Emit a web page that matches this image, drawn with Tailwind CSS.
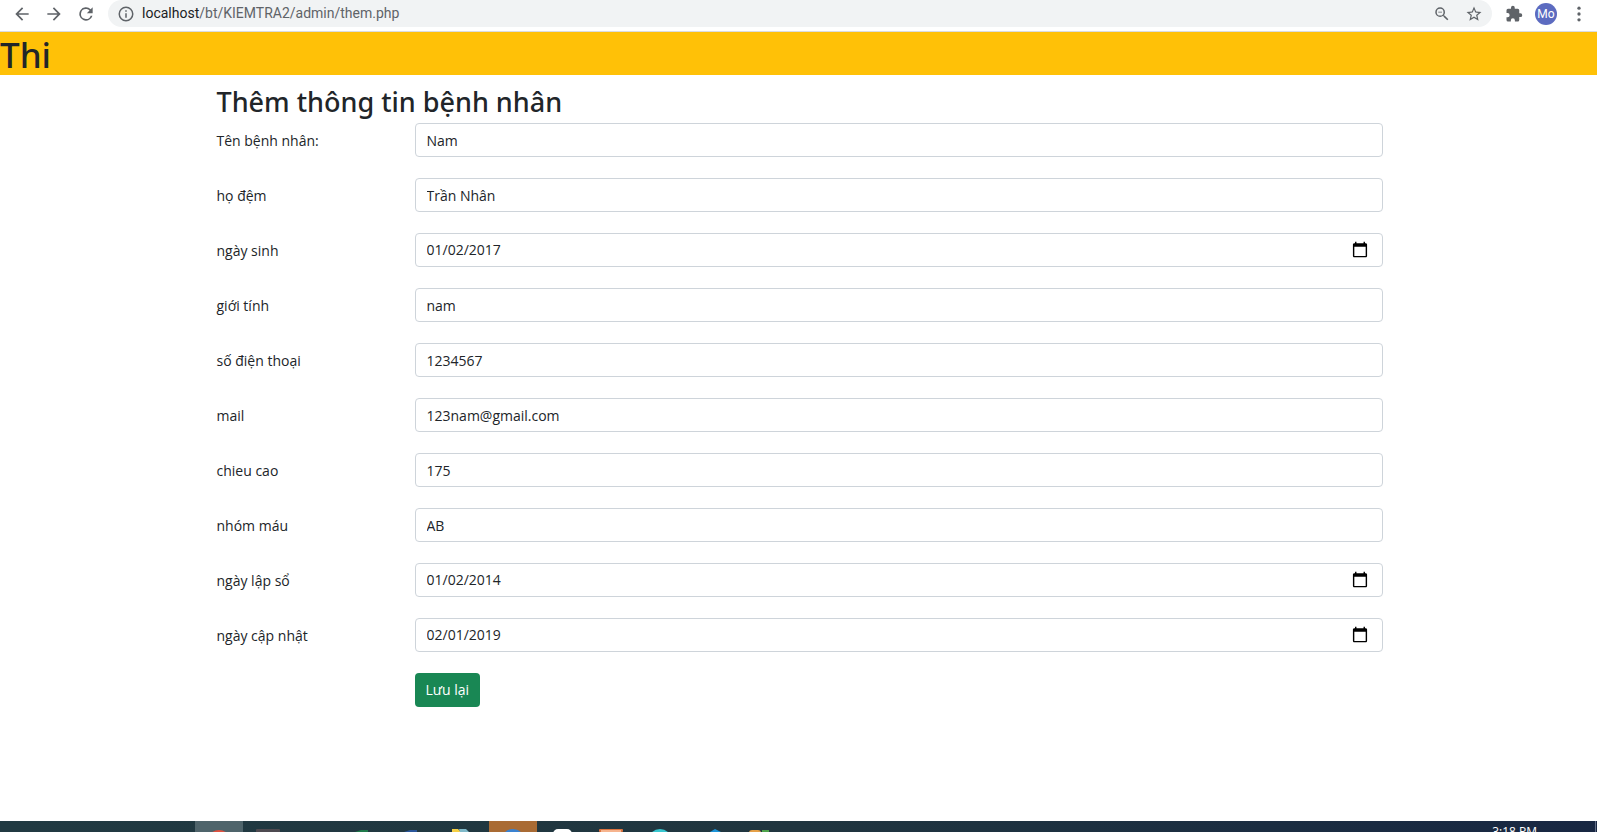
<!DOCTYPE html>
<html lang="vi">
<head>
<meta charset="utf-8">
<title>Thêm thông tin bệnh nhân</title>
<script src="https://cdn.jsdelivr.net/npm/@tailwindcss/browser@4"></script>
</head>
<body class="flex h-screen flex-col overflow-hidden bg-white font-['Open_Sans','Noto_Sans',sans-serif] text-sm text-[#212529]">

<!-- Browser toolbar -->
<header class="flex h-8 shrink-0 items-start border-b border-[#dadce0] bg-white text-[#5f6368]">
  <div class="flex h-[27px] w-27 shrink-0 items-center gap-3 pl-3">
    <button aria-label="Back"><svg class="size-5" viewBox="0 0 24 24" fill="currentColor"><path d="M20 11H7.83l5.59-5.59L12 4l-8 8 8 8 1.41-1.41L7.83 13H20z"/></svg></button>
    <button aria-label="Forward"><svg class="size-5" viewBox="0 0 24 24" fill="currentColor"><path d="M12 4l-1.41 1.41L16.17 11H4v2h12.17l-5.58 5.59L12 20l8-8z"/></svg></button>
    <button aria-label="Reload"><svg class="size-5" viewBox="0 0 24 24" fill="currentColor"><path d="M17.65 6.35A8 8 0 1 0 19.73 14h-2.08A6 6 0 1 1 12 6c1.66 0 3.14.69 4.22 1.78L13 11h7V4z"/></svg></button>
  </div>
  <div class="flex h-[27px] flex-1 items-center rounded-full bg-[#f1f3f4] pr-[9px] pl-[9px]">
    <button aria-label="Site information"><svg class="size-[18px]" viewBox="0 0 24 24" fill="currentColor"><path d="M11 17h2v-6h-2v6zm1-15a10 10 0 1 0 0 20 10 10 0 0 0 0-20zm0 18a8 8 0 1 1 0-16 8 8 0 0 1 0 16zM11 9h2V7h-2v2z"/></svg></button>
    <a href="#" class="ml-[7px] flex-1 pb-px font-[Roboto,sans-serif]"><span class="text-[#202124]">localhost</span>/bt/KIEMTRA2/admin/them.php</a>
    <button aria-label="Zoom out"><svg class="size-[18px]" viewBox="0 0 24 24" fill="currentColor"><path d="M15.5 14h-.79l-.28-.27A6.47 6.47 0 0 0 16 9.500 6.500 6.500 0 1 0 9.500 16c1.610 0 3.090-.59 4.230-1.570l.27.28v.79l5 4.990L20.490 19l-4.990-5zm-6 0a4.500 4.500 0 1 1 0-9 4.500 4.500 0 0 1 0 9zM7 9h5v1H7z"/></svg></button>
    <button aria-label="Bookmark" class="ml-[14px]"><svg class="size-[18px]" viewBox="0 0 24 24" fill="currentColor"><path d="M22 9.240l-7.190-.62L12 2 9.190 8.630 2 9.240l5.460 4.730L5.820 21 12 17.270 18.180 21l-1.630-7.030L22 9.240zM12 15.400l-3.760 2.270 1-4.280-3.320-2.880 4.380-.38L12 6.100l1.710 4.040 4.380.38-3.320 2.880 1 4.280L12 15.400z"/></svg></button>
  </div>
  <div class="flex h-[27px] shrink-0 items-center pr-2 pl-[13px]">
    <button aria-label="Extensions"><svg class="size-[18px]" viewBox="0 0 24 24" fill="currentColor"><path d="M20.500 11H19V7a2 2 0 0 0-2-2h-4V3.500a2.500 2.500 0 0 0-5 0V5H4a2 2 0 0 0-1.990 2v3.800H3.500a2.700 2.700 0 0 1 0 5.400H2V20a2 2 0 0 0 2 2h3.800v-1.500a2.700 2.700 0 0 1 5.400 0V22H17a2 2 0 0 0 2-2v-4h1.500a2.500 2.500 0 0 0 0-5z"/></svg></button>
    <button aria-label="Profile" class="ml-3 size-[22px] rounded-full bg-[#5c6bc0] font-[Roboto,sans-serif] text-xs text-white">Mo</button>
    <button aria-label="Menu" class="ml-3"><svg class="size-5" viewBox="0 0 24 24" fill="currentColor"><circle cx="12" cy="5" r="2"/><circle cx="12" cy="12" r="2"/><circle cx="12" cy="19" r="2"/></svg></button>
  </div>
</header>

<main class="flex-1">
  <h1 class="bg-[#ffc107] pt-[3px] font-['Noto_Sans',sans-serif] text-[35px]/[40px] font-medium">Thi</h1>
  <form class="mx-auto max-w-[1188px] pt-[9px] pr-[10px] pl-3">
    <h2 class="mb-1 font-['Noto_Sans',sans-serif] text-[27px]/[35px] font-medium">Thêm thông tin bệnh nhân</h2>
    <div class="grid grid-cols-[198px_1fr] items-center gap-y-[21px] [&_::-webkit-calendar-picker-indicator]:mr-0.5 [&_::-webkit-calendar-picker-indicator]:size-[18px] [&_::-webkit-calendar-picker-indicator]:p-0 [&_::-webkit-datetime-edit-day-field]:p-0 [&_::-webkit-datetime-edit-month-field]:p-0 [&_::-webkit-datetime-edit-year-field]:p-0">
      <label for="ten" class="pt-px">Tên bệnh nhân:</label>
      <input id="ten" type="text" value="Nam" class="h-[34px] w-full rounded border border-[#ced4da] px-[11px]">
      <label for="ho" class="pt-px">họ đệm</label>
      <input id="ho" type="text" value="Trần Nhân" class="h-[34px] w-full rounded border border-[#ced4da] px-[11px]">
      <label for="sinh" class="pt-px">ngày sinh</label>
      <input id="sinh" type="date" value="2017-01-02" class="h-[34px] w-full rounded border border-[#ced4da] px-[11px]">
      <label for="gioi" class="pt-px">giới tính</label>
      <input id="gioi" type="text" value="nam" class="h-[34px] w-full rounded border border-[#ced4da] px-[11px]">
      <label for="sdt" class="pt-px">số điện thoại</label>
      <input id="sdt" type="text" value="1234567" class="h-[34px] w-full rounded border border-[#ced4da] px-[11px]">
      <label for="mail" class="pt-px">mail</label>
      <input id="mail" type="text" value="123nam@gmail.com" class="h-[34px] w-full rounded border border-[#ced4da] px-[11px]">
      <label for="cao" class="pt-px">chieu cao</label>
      <input id="cao" type="text" value="175" class="h-[34px] w-full rounded border border-[#ced4da] px-[11px]">
      <label for="mau" class="pt-px">nhóm máu</label>
      <input id="mau" type="text" value="AB" class="h-[34px] w-full rounded border border-[#ced4da] px-[11px]">
      <label for="lap" class="pt-px">ngày lập sổ</label>
      <input id="lap" type="date" value="2014-01-02" class="h-[34px] w-full rounded border border-[#ced4da] px-[11px]">
      <label for="capnhat" class="pt-px">ngày cập nhật</label>
      <input id="capnhat" type="date" value="2019-02-01" class="h-[34px] w-full rounded border border-[#ced4da] px-[11px]">
      <button type="button" class="col-start-2 h-[34px] justify-self-start rounded bg-[#198754] px-[11px] text-white">Lưu lại</button>
    </div>
  </form>
</main>

<!-- Top edge of the desktop taskbar -->
<footer class="flex h-[11px] shrink-0 items-start justify-between overflow-hidden bg-linear-to-r from-[#213a42] via-[#20353f] to-[#182742] pl-[195px]">
  <div class="flex gap-px">
    <svg class="h-[11px] w-12 bg-[#4f646b]" viewBox="0 0 48 11"><circle cx="24" cy="21" r="12" fill="#e0513f"/></svg>
    <svg class="h-[11px] w-12" viewBox="0 0 48 11"><rect x="12" y="8" width="24" height="8" rx="1" fill="#4e4a50"/></svg>
    <svg class="h-[11px] w-12" viewBox="0 0 48 11"></svg>
    <svg class="h-[11px] w-12" viewBox="0 0 48 11"><path d="M13 11l6-2h7v2z" fill="#1f7a4a"/></svg>
    <svg class="h-[11px] w-12" viewBox="0 0 48 11"><path d="M13 11l6-2h7v2z" fill="#2a569a"/></svg>
    <svg class="h-[11px] w-12" viewBox="0 0 48 11"><path d="M12 8h6l3 3h-9z" fill="#f5cf45"/><path d="M19 8h7l3 3h-9z" fill="#7fb9c9"/></svg>
    <svg class="h-[11px] w-12 bg-[#a96b34]" viewBox="0 0 48 11"><circle cx="24" cy="20" r="12" fill="#3b82d0"/></svg>
    <svg class="h-[11px] w-12" viewBox="0 0 48 11"><rect x="15" y="8" width="19" height="12" rx="5" fill="#fff"/></svg>
    <svg class="h-[11px] w-12" viewBox="0 0 48 11"><rect x="12" y="8" width="24" height="3" rx="1" fill="#dc7440"/><path d="M14 9h20v2H14z" fill="#f6b48e"/></svg>
    <svg class="h-[11px] w-12" viewBox="0 0 48 11"><circle cx="24" cy="20" r="12" fill="#38c6cf"/></svg>
    <svg class="h-[11px] w-12" viewBox="0 0 48 11"><path d="M25 11l5-3 6 3z" fill="#1d94d8"/></svg>
    <svg class="h-[11px] w-12" viewBox="0 0 48 11"><rect x="15" y="9" width="12" height="5" rx="3" fill="#e5a047"/><path d="M28 9h7v2h-7z" fill="#4fa34c"/></svg>
  </div>
  <div class="flex h-[11px] items-start">
    <time class="mt-[3px] mr-[58px] text-xs/4 text-white">3:18 PM</time>
    <span class="mr-px h-[11px] w-px bg-[#64708a]"></span>
  </div>
</footer>
</body>
</html>
